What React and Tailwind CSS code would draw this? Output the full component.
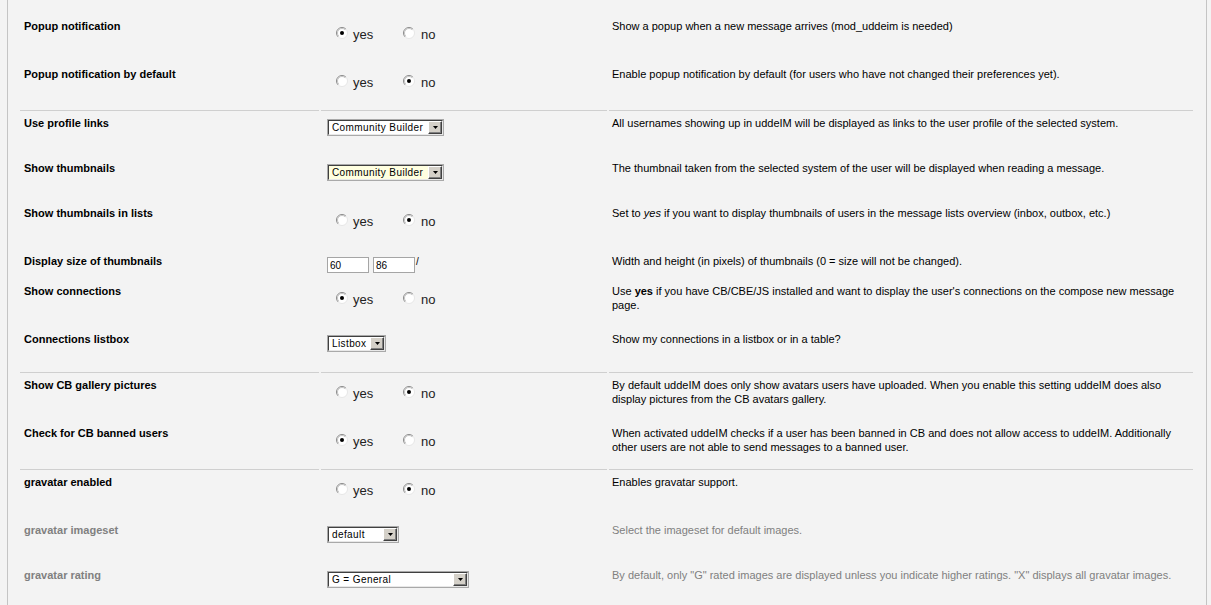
import React from "react";

const FONT = { fontFamily: '"Liberation Sans", Arial, sans-serif' };

function Radio({ checked }) {
  return (
    <svg width="12" height="12" viewBox="0 0 12 12" className="shrink-0">
      <circle cx="6" cy="6" r="5.5" fill="#ffffff" />
      <path d="M2.1 9.9 A5.5 5.5 0 0 1 9.9 2.1" fill="none" stroke="#8a8a8a" strokeWidth="1" />
      <path d="M9.9 2.1 A5.5 5.5 0 0 1 2.1 9.9" fill="none" stroke="#e6e6e6" strokeWidth="1" />
      <path d="M2.8 9.2 A4.5 4.5 0 0 1 9.2 2.8" fill="none" stroke="#c4c4c4" strokeWidth="1" />
      {checked && <circle cx="6" cy="6" r="2" fill="#000000" />}
    </svg>
  );
}

function RadioPair({ value }) {
  return (
    <div className="flex pl-[15px]">
      <div className="flex w-[67px] items-start">
        <div className="mt-[13px]">
          <Radio checked={value === "yes"} />
        </div>
        <span className="ml-[5px] mt-[14px] text-[13px] leading-[13px] text-[#222]">yes</span>
      </div>
      <div className="flex items-start">
        <div className="mt-[13px]">
          <Radio checked={value === "no"} />
        </div>
        <span className="ml-[6px] mt-[14px] text-[13px] leading-[13px] text-[#222]">no</span>
      </div>
    </div>
  );
}

function Select({ text, width, yellow }) {
  return (
    <div className="pl-[6px] pt-[8px]">
      <div
        className="flex h-[17px] border border-[#a9a9a9]"
        style={{ width }}
      >
        <div className="flex min-w-0 flex-1 border-l border-t border-l-[#404040] border-t-[#404040] border-b border-r border-b-[#e8e8e8] border-r-[#e8e8e8]">
          <div
            className={
              "flex min-w-0 flex-1 items-center overflow-hidden whitespace-nowrap pl-[3px] text-[10px] leading-[13px] tracking-[0.4px] text-black " +
              (yellow ? "bg-[#ffffe0]" : "bg-white")
            }
          >
            {text}
          </div>
          <div className="flex w-[14px] shrink-0 items-center justify-center border-l border-t border-l-white border-t-white border-b border-r border-b-[#404040] border-r-[#404040] bg-[#d4d0c8] shadow-[inset_-1px_-1px_0_#808080]">
            <svg width="5" height="3" viewBox="0 0 5 3">
              <polygon points="0,0 5,0 2.5,3" fill="#000" />
            </svg>
          </div>
        </div>
      </div>
    </div>
  );
}

function Inputs() {
  return (
    <div className="flex items-start pl-[6px] pt-[8px]">
      <div className="flex h-[16px] w-[42px] items-center border border-[#a5a5a5] bg-white pl-[2px] text-[10px] text-black">
        60
      </div>
      <div className="ml-[4px] flex h-[16px] w-[42px] items-center border border-[#a5a5a5] bg-white pl-[2px] text-[10px] text-black">
        86
      </div>
      <span className="ml-[1px] mt-[-1px] text-[10px] leading-[12px] text-black">/</span>
    </div>
  );
}

function Row({ label, control, desc, h, sep, gray }) {
  const border = sep ? "border-t border-[#cfcfcf]" : "";
  const tc = gray ? "text-[#808080]" : "text-black";
  return (
    <div className="flex gap-[2px]" style={{ height: h }}>
      <div className={"w-[299px] pl-[4px] pt-[6px] text-[11px] font-bold leading-[12px] " + tc + " " + border}>
        {label}
      </div>
      <div className={"w-[286px] " + border}>{control}</div>
      <div className={"w-[584px] whitespace-nowrap pl-[3px] pt-[5px] text-[11px] leading-[14px] " + tc + " " + border}>
        {desc}
      </div>
    </div>
  );
}

export default function App() {
  return (
    <div className="h-[605px] w-[1211px] overflow-hidden bg-[#f3f3f3]" style={FONT}>
      <div className="ml-[7px] h-full w-[1200px] border-x border-[#c4c4c4] pl-[12px] pt-[14px]">
        <Row
          h={48}
          label="Popup notification"
          control={<RadioPair value="yes" />}
          desc="Show a popup when a new message arrives (mod_uddeim is needed)"
        />
        <Row
          h={48}
          label="Popup notification by default"
          control={<RadioPair value="no" />}
          desc="Enable popup notification by default (for users who have not changed their preferences yet)."
        />
        <Row
          h={46}
          sep
          label="Use profile links"
          control={<Select text="Community Builder" width={117} />}
          desc="All usernames showing up in uddeIM will be displayed as links to the user profile of the selected system."
        />
        <Row
          h={45}
          label="Show thumbnails"
          control={<Select text="Community Builder" width={117} yellow />}
          desc="The thumbnail taken from the selected system of the user will be displayed when reading a message."
        />
        <Row
          h={48}
          label="Show thumbnails in lists"
          control={<RadioPair value="no" />}
          desc={
            <>
              Set to <i>yes</i> if you want to display thumbnails of users in the message lists overview (inbox, outbox, etc.)
            </>
          }
        />
        <Row
          h={30}
          label="Display size of thumbnails"
          control={<Inputs />}
          desc="Width and height (in pixels) of thumbnails (0 = size will not be changed)."
        />
        <Row
          h={48}
          label="Show connections"
          control={<RadioPair value="yes" />}
          desc={
            <>
              Use <b>yes</b> if you have CB/CBE/JS installed and want to display the user's connections on the compose new message
              <br />
              page.
            </>
          }
        />
        <Row
          h={45}
          label="Connections listbox"
          control={<Select text="Listbox" width={59} />}
          desc="Show my connections in a listbox or in a table?"
        />
        <Row
          h={49}
          sep
          label="Show CB gallery pictures"
          control={<RadioPair value="no" />}
          desc={
            <>
              By default uddeIM does only show avatars users have uploaded. When you enable this setting uddeIM does also
              <br />
              display pictures from the CB avatars gallery.
            </>
          }
        />
        <Row
          h={48}
          label="Check for CB banned users"
          control={<RadioPair value="yes" />}
          desc={
            <>
              When activated uddeIM checks if a user has been banned in CB and does not allow access to uddeIM. Additionally
              <br />
              other users are not able to send messages to a banned user.
            </>
          }
        />
        <Row
          h={49}
          sep
          label="gravatar enabled"
          control={<RadioPair value="no" />}
          desc="Enables gravatar support."
        />
        <Row
          h={45}
          gray
          label="gravatar imageset"
          control={<Select text="default" width={72} />}
          desc="Select the imageset for default images."
        />
        <Row
          h={42}
          gray
          label="gravatar rating"
          control={<Select text="G = General" width={142} />}
          desc={'By default, only "G" rated images are displayed unless you indicate higher ratings. "X" displays all gravatar images.'}
        />
      </div>
    </div>
  );
}
